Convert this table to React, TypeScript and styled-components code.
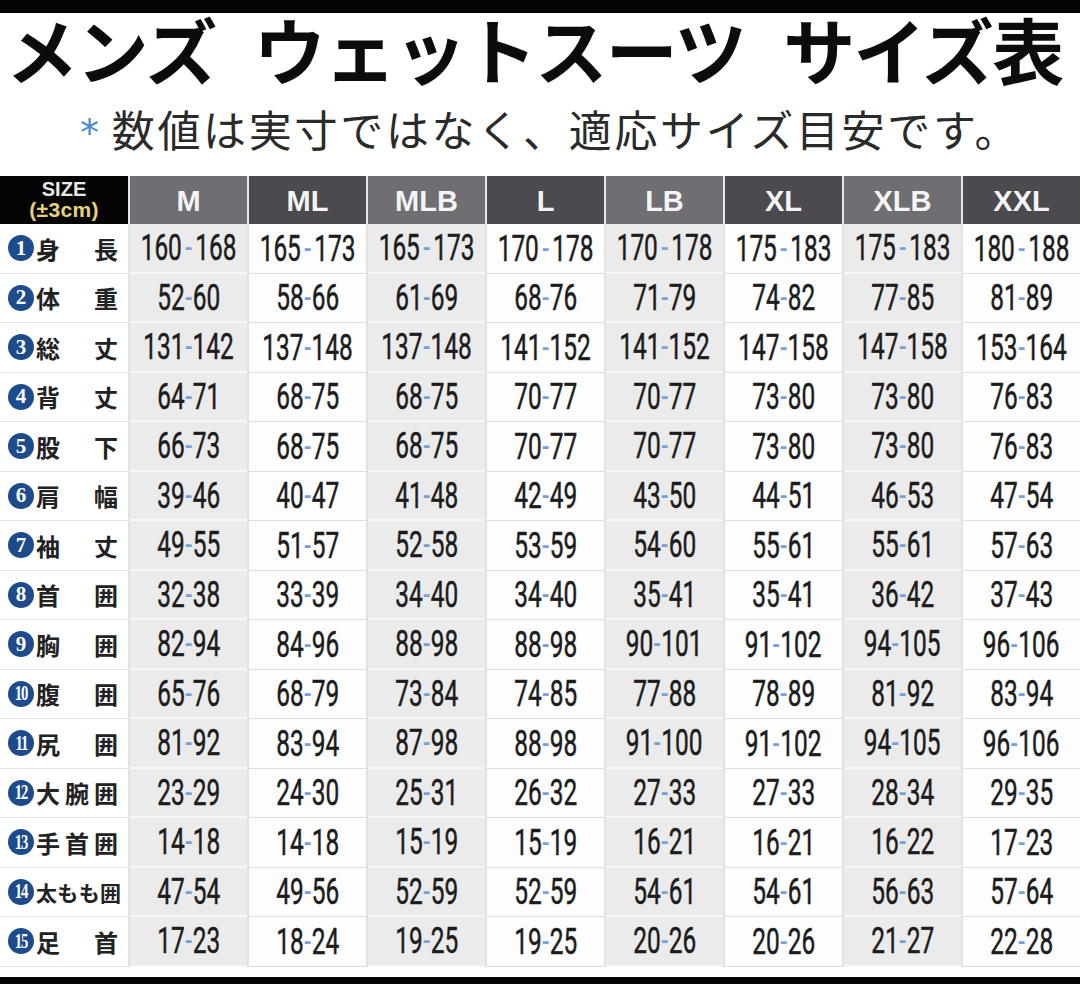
import React from "react";
import styled, { createGlobalStyle } from "styled-components";

const Global = createGlobalStyle`
  html, body { margin: 0; padding: 0; background: #ffffff; }
  body { width: 1080px; height: 984px; overflow: hidden; font-family: "Noto Sans CJK JP", "Noto Sans", sans-serif; }
`;

const Page = styled.div`
  width: 1080px;
  height: 984px;
  display: flex;
  flex-direction: column;
  background: #fff;
`;

const Bar = styled.div<{ $h: number }>`
  height: ${(p) => p.$h}px;
  background: #050505;
  flex: none;
`;

const Title = styled.h1`
  margin: -1px 0 0 0;
  display: flex;
  align-items: center;
  gap: 38px;
  padding: 0 0 0 6px;
  font-family: "Noto Sans CJK JP", sans-serif;
  font-weight: 700;
  font-size: 72px;
  line-height: 72px;
  color: #0c0c0c;
  letter-spacing: -1.6px;
  white-space: nowrap;
`;

const Word = styled.span``;

const Subtitle = styled.p`
  margin: 19px 0 0 0;
  height: 50px;
  display: flex;
  align-items: center;
  padding-left: 80px;
  font-family: "Noto Sans CJK JP", sans-serif;
  font-weight: 400;
  font-size: 43px;
  line-height: 50px;
  color: #2a2a2a;
  letter-spacing: 2.7px;
  white-space: nowrap;
`;

const Star = styled.span`
  color: #4d8ad0;
  font-size: 38px;
  margin-right: 10px;
  padding-top: 10px;
  font-family: "DejaVu Sans", sans-serif;
`;

const Table = styled.div`
  margin-top: 23px;
  display: flex;
  flex-direction: column;
`;

const HeadRow = styled.div`
  display: grid;
  grid-template-columns: 128px repeat(8, minmax(0, 1fr));
  column-gap: 2px;
  height: 48px;
  background: #e6e6e6;
`;

const SizeCell = styled.div`
  background: #050505;
  display: flex;
  flex-direction: column;
  align-items: center;
  justify-content: center;
  font-family: "Liberation Sans", Arial, sans-serif;
  font-weight: 700;
`;

const SizeTop = styled.span`
  color: #e9e9e9;
  font-size: 20px;
  line-height: 19px;
`;

const SizeBottom = styled.span`
  color: #e6d27c;
  font-size: 21px;
  line-height: 22px;
  letter-spacing: 0.3px;
`;

const HeadCell = styled.div<{ $light: boolean }>`
  background: ${(p) => (p.$light ? "#6e6e73" : "#4a4a4f")};
  color: #f4f4f4;
  display: flex;
  align-items: center;
  justify-content: center;
  font-family: "Liberation Sans", Arial, sans-serif;
  font-weight: 700;
  font-size: 29px;
  padding-top: 2px;
`;

const BodyRow = styled.div`
  display: grid;
  grid-template-columns: 128px repeat(8, minmax(0, 1fr));
  column-gap: 2px;
  height: 49.5px;
  background: #e2e2e2;
`;

const LabelCell = styled.div`
  background: #fff;
  display: flex;
  align-items: center;
  padding-left: 8px;
  border-bottom: 1px solid #e3e3e3;
`;

const Circle = styled.span`
  width: 26px;
  height: 26px;
  border-radius: 50%;
  background: #1d4b8c;
  color: #fff;
  display: inline-flex;
  align-items: center;
  justify-content: center;
  font-family: "Liberation Serif", serif;
  font-weight: 700;
  flex: none;
`;

const CircleDigits = styled.span<{ $two: boolean }>`
  display: inline-block;
  transform: ${(p) => (p.$two ? "scaleX(0.7)" : "none")};
  letter-spacing: ${(p) => (p.$two ? "-1.5px" : "0")};
  font-size: 21px;
  line-height: 1;
`;

const LabelText = styled.span<{ $n: number }>`
  margin-left: 2px;
  width: ${(p) => (p.$n >= 4 ? 84 : 82)}px;
  display: flex;
  justify-content: space-between;
  font-family: "Noto Sans CJK JP", sans-serif;
  font-weight: 700;
  font-size: ${(p) => (p.$n >= 4 ? 21 : 24)}px;
  color: #222;
  letter-spacing: ${(p) => (p.$n >= 4 ? "-1px" : "0")};
`;

const DataCell = styled.div<{ $shade: boolean }>`
  background: ${(p) => (p.$shade ? "#ebebeb" : "#fdfdfd")};
  border-bottom: ${(p) => (p.$shade ? "2px solid #f7f7f7" : "1px solid #dedede")};
  display: flex;
  align-items: center;
  justify-content: center;
  min-width: 0;
`;

const Num = styled.span`
  display: inline-block;
  font-family: Roboto, "Liberation Sans", sans-serif;
  font-weight: 400;
  font-size: 37px;
  line-height: 1;
  color: #1c1c1c;
  transform: scaleX(0.66);
  white-space: nowrap;
  -webkit-text-stroke: 0.5px #1c1c1c;
`;

const Dash = styled.span<{ $wide: boolean }>`
  color: #7a9fd6;
  -webkit-text-stroke: 0;
  margin: 0 ${(p) => (p.$wide ? 5 : 1)}px;
`;

const Spacer = styled.div`
  flex: 1;
`;

const sizes = ["M", "ML", "MLB", "L", "LB", "XL", "XLB", "XXL"];

const rows: [string, string[]][] = [
  ["身長", ["160-168", "165-173", "165-173", "170-178", "170-178", "175-183", "175-183", "180-188"]],
  ["体重", ["52-60", "58-66", "61-69", "68-76", "71-79", "74-82", "77-85", "81-89"]],
  ["総丈", ["131-142", "137-148", "137-148", "141-152", "141-152", "147-158", "147-158", "153-164"]],
  ["背丈", ["64-71", "68-75", "68-75", "70-77", "70-77", "73-80", "73-80", "76-83"]],
  ["股下", ["66-73", "68-75", "68-75", "70-77", "70-77", "73-80", "73-80", "76-83"]],
  ["肩幅", ["39-46", "40-47", "41-48", "42-49", "43-50", "44-51", "46-53", "47-54"]],
  ["袖丈", ["49-55", "51-57", "52-58", "53-59", "54-60", "55-61", "55-61", "57-63"]],
  ["首囲", ["32-38", "33-39", "34-40", "34-40", "35-41", "35-41", "36-42", "37-43"]],
  ["胸囲", ["82-94", "84-96", "88-98", "88-98", "90-101", "91-102", "94-105", "96-106"]],
  ["腹囲", ["65-76", "68-79", "73-84", "74-85", "77-88", "78-89", "81-92", "83-94"]],
  ["尻囲", ["81-92", "83-94", "87-98", "88-98", "91-100", "91-102", "94-105", "96-106"]],
  ["大腕囲", ["23-29", "24-30", "25-31", "26-32", "27-33", "27-33", "28-34", "29-35"]],
  ["手首囲", ["14-18", "14-18", "15-19", "15-19", "16-21", "16-21", "16-22", "17-23"]],
  ["太もも囲", ["47-54", "49-56", "52-59", "52-59", "54-61", "54-61", "56-63", "57-64"]],
  ["足首", ["17-23", "18-24", "19-25", "19-25", "20-26", "20-26", "21-27", "22-28"]],
];

function Range({ v }: { v: string }) {
  const [a, b] = v.split("-");
  const wide = a.length === 3 && b.length === 3 && Number(a) >= 160;
  return (
    <Num>
      {a}
      <Dash $wide={wide}>-</Dash>
      {b}
    </Num>
  );
}

export default function App() {
  return (
    <Page>
      <Global />
      <Bar $h={13} />
      <Title>
        <Word>メンズ</Word>
        <Word>ウェットスーツ</Word>
        <Word>サイズ表</Word>
      </Title>
      <Subtitle>
        <Star>*</Star>数値は実寸ではなく、適応サイズ目安です。
      </Subtitle>
      <Table>
        <HeadRow>
          <SizeCell>
            <SizeTop>SIZE</SizeTop>
            <SizeBottom>(±3cm)</SizeBottom>
          </SizeCell>
          {sizes.map((s, i) => (
            <HeadCell key={s} $light={i % 2 === 0}>
              {s}
            </HeadCell>
          ))}
        </HeadRow>
        {rows.map(([label, vals], r) => (
          <BodyRow key={label}>
            <LabelCell>
              <Circle>
                <CircleDigits $two={r + 1 >= 10}>{r + 1}</CircleDigits>
              </Circle>
              <LabelText $n={label.length}>
                {label.split("").map((c, k) => (
                  <span key={k}>{c}</span>
                ))}
              </LabelText>
            </LabelCell>
            {vals.map((v, i) => (
              <DataCell key={i} $shade={i % 2 === 0}>
                <Range v={v} />
              </DataCell>
            ))}
          </BodyRow>
        ))}
      </Table>
      <Spacer />
      <Bar $h={7} />
    </Page>
  );
}
